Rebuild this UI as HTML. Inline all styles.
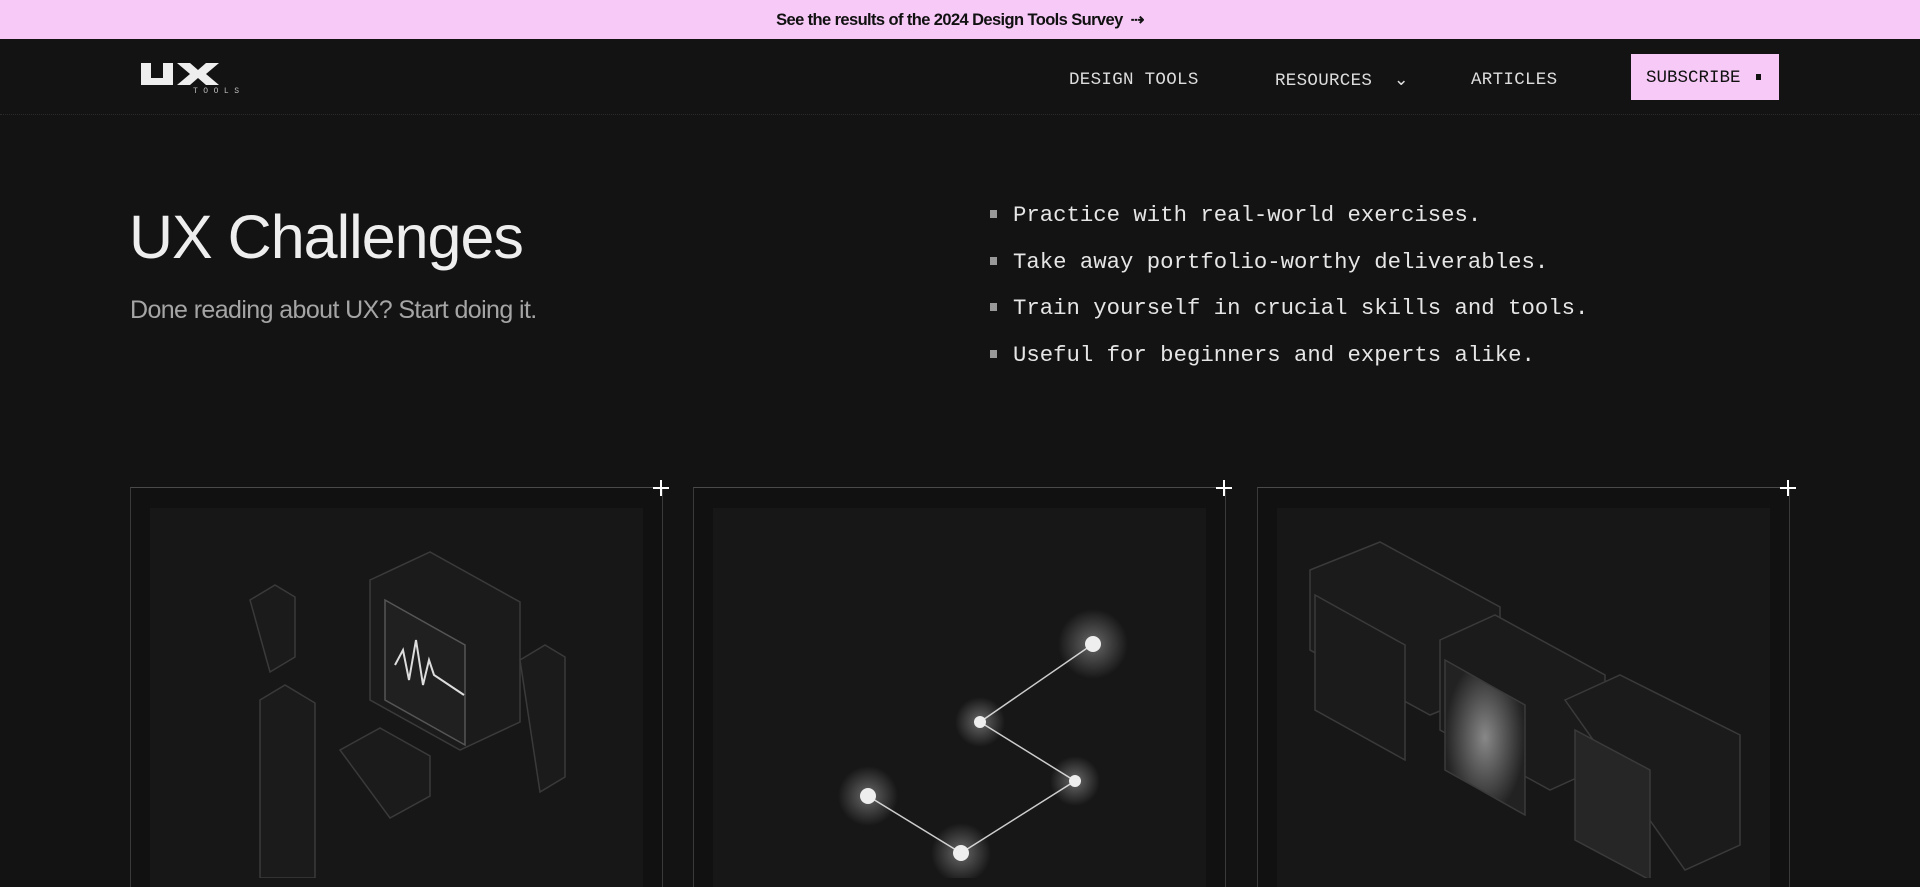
<!DOCTYPE html>
<html><head><meta charset="utf-8"><style>
*{margin:0;padding:0;box-sizing:border-box}
body{width:1920px;height:878px;overflow:hidden;background:#131313;font-family:"Liberation Sans",sans-serif;color:#eee;position:relative}
.banner{height:39px;background:#f6c9f7;color:#111;font-size:16.5px;font-weight:bold;letter-spacing:-0.6px;text-align:center;line-height:40px}
.nav{height:76px;border-bottom:1px dotted #2a2a2a;position:relative}
.nav a{position:absolute;top:31px;font-family:"Liberation Mono",monospace;font-size:17.5px;color:#ddd;letter-spacing:0.3px}
.sub{position:absolute;left:1631px;top:15px;width:148px;height:46px;background:#f6c9f7;color:#111;font-family:"Liberation Mono",monospace;font-size:17.5px;line-height:48px;padding-left:15px}
.sub i{position:absolute;right:18px;top:20px;width:5px;height:6px;background:#111}
h1{position:absolute;left:129px;top:202px;font-size:61px;font-weight:normal;letter-spacing:-1px;color:#eee}
.lead{position:absolute;left:130px;top:296px;font-size:25px;color:#a5a5a5;letter-spacing:-0.6px}
ul{position:absolute;left:990px;top:202px;list-style:none;font-family:"Liberation Mono",monospace;font-size:22.3px;color:#e6e6e6}
li{height:46.5px;position:relative;padding-left:23px}
li:before{content:"";position:absolute;left:0;top:8px;width:7px;height:8px;background:#999}
.card{position:absolute;top:487px;width:533px;height:400px;border-left:1px solid #3a3a3a;border-top:1px solid #4a4a4a;border-right:1px solid #3a3a3a;background:#111}
.card .in{position:absolute;left:19px;top:20px;right:19px;bottom:0;background:#171717}
.plus{position:absolute;top:-13px;right:-12px;width:26px;height:26px}
.plus:before{content:"";position:absolute;left:12px;top:5px;width:2px;height:16px;background:#fff}
.plus:after{content:"";position:absolute;left:5px;top:12px;width:16px;height:2px;background:#fff}
</style></head><body>
<div class="banner">See the results of the 2024 Design Tools Survey &nbsp;⇢</div>
<div class="nav">
<svg style="position:absolute;left:141px;top:24px" width="100" height="30" viewBox="0 0 100 30"><path d="M0 0h10v15h12V0h10v22H0z M36 0h13l8 7 8-7h13l-13 11 13 11h-13l-8-7-8 7H36l13-11z" fill="#eee"/><text x="52" y="30" font-family="Liberation Mono" font-size="8" fill="#bbb" textLength="46">TOOLS</text></svg>
<a style="left:1069px">DESIGN TOOLS</a>
<a style="left:1275px">RESOURCES &nbsp;⌄</a>
<a style="left:1471px">ARTICLES</a>
<div class="sub">SUBSCRIBE<i></i></div>
</div>
<h1>UX Challenges</h1>
<div class="lead">Done reading about UX? Start doing it.</div>
<ul><li>Practice with real-world exercises.</li><li>Take away portfolio-worthy deliverables.</li><li>Train yourself in crucial skills and tools.</li><li>Useful for beginners and experts alike.</li></ul>
<div class="card" style="left:130px"><div class="in"></div><div class="plus"></div></div>
<div class="card" style="left:693px"><div class="in"></div><div class="plus"></div></div>
<div class="card" style="left:1257px"><div class="in"></div><div class="plus"></div></div>
<svg style="position:absolute;left:0;top:0" width="1920" height="878">
<defs><radialGradient id="g"><stop offset="0" stop-color="#fff" stop-opacity=".35"/><stop offset="1" stop-color="#fff" stop-opacity="0"/></radialGradient>
<radialGradient id="s"><stop offset="0" stop-color="#888"/><stop offset="1" stop-color="#222"/></radialGradient></defs>
<g stroke="#3a3a3a" fill="#1b1b1b" stroke-width="1.5">
<path d="M370 580l60-28 90 50v120l-60 28-90-50z"/><path d="M385 600l0 100 80 45 0-100z" fill="#202020" stroke="#555"/>
<path d="M250 600l25-15 20 12v60l-25 15z"/><path d="M520 660l25-15 20 12v120l-25 15z"/>
<path d="M260 700l25-15 30 18v175h-55z"/><path d="M340 750l40-22 50 28v40l-40 22z"/>
</g>
<path d="M395 665l8-15 6 30 7-40 7 45 6-25 5 15 30 20" stroke="#ddd" stroke-width="2" fill="none"/>
<g stroke="#3a3a3a" fill="#1b1b1b" stroke-width="1.5">
<path d="M1310 570l70-28 120 65v80l-70 28-120-65z"/><path d="M1315 595v115l90 50v-115z"/>
<path d="M1440 640l55-25 110 60v90l-55 25-110-60z"/><path d="M1445 660v110l80 45v-110z" fill="url(#s)"/>
<path d="M1565 700l55-25 120 60v110l-55 25z"/><path d="M1575 730v110l75 40v-110z" fill="#262626"/>
</g>
<polyline points="868,796 961,853 1075,781 980,722 1093,644" stroke="#ccc" stroke-width="1.5" fill="none"/>
<g fill="url(#g)"><circle cx="868" cy="796" r="30"/><circle cx="961" cy="853" r="30"/><circle cx="1075" cy="781" r="25"/><circle cx="980" cy="722" r="25"/><circle cx="1093" cy="644" r="35"/></g>
<g fill="#eee"><circle cx="868" cy="796" r="8"/><circle cx="961" cy="853" r="8"/><circle cx="1075" cy="781" r="6"/><circle cx="980" cy="722" r="6"/><circle cx="1093" cy="644" r="8"/></g>
</svg>
</body></html>
